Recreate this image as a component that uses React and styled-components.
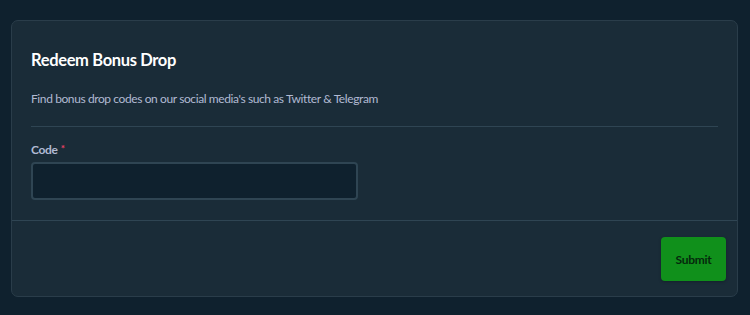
import styled, { createGlobalStyle } from "styled-components";

const GlobalStyle = createGlobalStyle`
    html, body {
        margin: 0;
        padding: 0;
        background: #0f212e;
        font-family: Lato, "Noto Sans", sans-serif;
    }
`;

const Page = styled.div`
    padding: 20px 12px 18px 11px;
    box-sizing: border-box;
    width: 750px;
    height: 315px;
`;

const Card = styled.div`
    background: #1a2c38;
    border: 1px solid #2a3d4a;
    border-radius: 7px;
    box-sizing: border-box;
    height: 277px;
    display: flex;
    flex-direction: column;
`;

const Body = styled.div`
    padding: 27px 19px 0 19px;
    display: flex;
    flex-direction: column;
`;

const Title = styled.h2`
    margin: 0;
    font-size: 16.5px;
    line-height: 24px;
    font-weight: 700;
    letter-spacing: -0.35px;
    color: #ffffff;
`;

const Description = styled.p`
    margin: 19px 0 0;
    font-size: 12px;
    line-height: 16px;
    letter-spacing: -0.4px;
    color: #b1bad3;
`;

const Divider = styled.hr`
    border: none;
    border-top: 1px solid #2f4553;
    margin: ${(p) => p.$margin || "0"};
    width: 100%;
`;

const Label = styled.label`
    font-size: 12px;
    line-height: 16px;
    font-weight: 700;
    letter-spacing: -0.3px;
    color: #b1bad3;
    display: flex;
    gap: 3px;

    span {
        color: #ed4163;
        font-size: 10px;
        line-height: 12px;
    }
`;

const Input = styled.input`
    margin-top: 4px;
    width: 327px;
    height: 38px;
    box-sizing: border-box;
    background: #0f212e;
    border: 2px solid #2f4553;
    border-radius: 4px;
    outline: none;
    color: #fff;
    font-family: inherit;
    padding: 0 10px;
`;

const Footer = styled.div`
    display: flex;
    justify-content: flex-end;
    padding: 16px 11px 0;
`;

const SubmitButton = styled.button`
    background: #10901b;
    border: none;
    border-radius: 4px;
    width: 65px;
    height: 44px;
    color: #05290c;
    font-family: inherit;
    font-size: 12px;
    font-weight: 700;
    letter-spacing: -0.3px;
    cursor: pointer;
    box-shadow: 0 1px 3px rgba(0, 0, 0, 0.25);
`;

export default function App() {
    return (
        <>
            <GlobalStyle />
            <Page>
                <Card>
                    <Body>
                        <Title>Redeem Bonus Drop</Title>
                        <Description>
                            Find bonus drop codes on our social media's such as Twitter &amp; Telegram
                        </Description>
                        <Divider $margin="19px 0 15px" />
                        <Label>
                            Code <span>*</span>
                        </Label>
                        <Input />
                    </Body>
                    <Divider $margin="20px 0 0" />
                    <Footer>
                        <SubmitButton>Submit</SubmitButton>
                    </Footer>
                </Card>
            </Page>
        </>
    );
}
